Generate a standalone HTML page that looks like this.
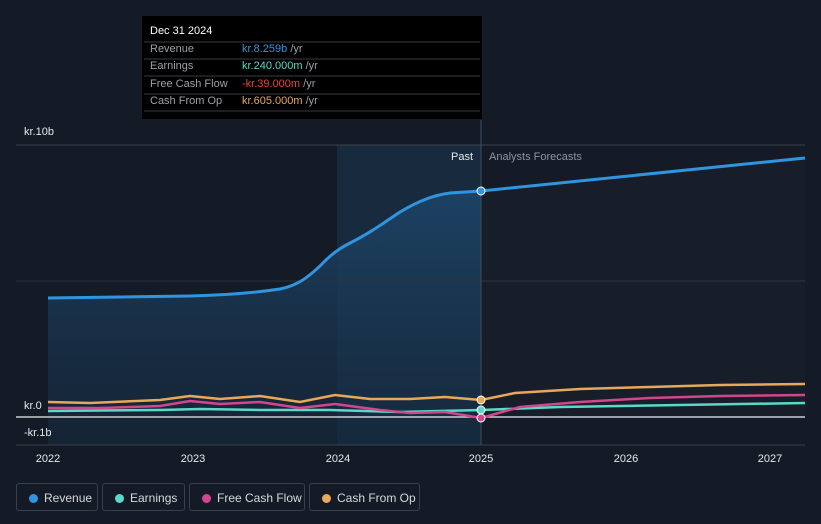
<!DOCTYPE html>
<html><head><meta charset="utf-8"><style>
body{margin:0;background:#151b26;font-family:"Liberation Sans",sans-serif;}
.lg{position:absolute;top:483px;height:28px;border:1px solid #3a404b;border-radius:3px;color:#d6d8dc;font-size:12px;line-height:28px;box-sizing:border-box;padding-left:27px}
.lg i{position:absolute;left:12px;top:10px;width:9px;height:9px;border-radius:50%}
.tt{position:absolute;left:142px;top:16px;width:340px;height:103px;background:#000;}
.tt div{position:absolute;left:8px;font-size:11px;color:#9aa0a8}
.tt span{position:absolute;left:92px;white-space:nowrap}
</style></head><body>
<svg width="821" height="524" style="position:absolute;left:0;top:0">
<defs><linearGradient id="g" x1="0" y1="0" x2="0" y2="1"><stop offset="0" stop-color="#1d4468" stop-opacity=".9"/><stop offset="1" stop-color="#15293d" stop-opacity=".6"/></linearGradient></defs>
<rect x="337" y="145" width="144" height="300" fill="#182a3d"/>
<path d="M48 298 L120 297 L190 296 C230 295 260 292 280 289 C300 285 310 275 320 266 C330 255 340 248 350 243 C370 233 385 222 400 212 C420 200 435 195 450 193 L481 191 L481 445 L48 445Z" fill="url(#g)"/>
<path d="M481 191 L805 158 L805 417 L481 417Z" fill="#1a212c" opacity=".6"/>
<line x1="16" y1="145" x2="805" y2="145" stroke="#3a414c"/>
<line x1="16" y1="281" x2="805" y2="281" stroke="#2c333e"/>
<line x1="16" y1="445" x2="805" y2="445" stroke="#3a414c"/>
<line x1="481" y1="120" x2="481" y2="445" stroke="#3d4f62"/>
<line x1="16" y1="417" x2="805" y2="417" stroke="#c8ccd2" stroke-width="1.5"/>
<path d="M48 298 L120 297 L190 296 C230 295 260 292 280 289 C300 285 310 275 320 266 C330 255 340 248 350 243 C370 233 385 222 400 212 C420 200 435 195 450 193 L481 191 L805 158" fill="none" stroke="#2f95e0" stroke-width="3"/>
<path d="M48 411 L160 410 L200 409 L260 410 L330 410 L400 412 L481 410 L560 407 L680 405 L805 403" fill="none" stroke="#5ad8c8" stroke-width="2.5"/>
<path d="M48 408 L100 408 L160 406 L190 401 L220 404 L260 402 L300 408 L335 404 L380 410 L410 413 L445 412 L481 418 L520 407 L580 402 L650 398 L720 396 L805 395" fill="none" stroke="#d2468e" stroke-width="2.5"/>
<path d="M48 402 L90 403 L160 400 L190 396 L220 399 L260 396 L300 402 L335 395 L370 399 L410 399 L445 397 L481 400 L515 393 L580 389 L650 387 L720 385 L805 384" fill="none" stroke="#e8a85a" stroke-width="2.5"/>
<circle cx="481" cy="191" r="4" fill="#2f95e0" stroke="#fff"/>
<circle cx="481" cy="400" r="4" fill="#e8a85a" stroke="#fff"/>
<circle cx="481" cy="410" r="4" fill="#5ad8c8" stroke="#fff"/>
<circle cx="481" cy="418" r="4" fill="#d2468e" stroke="#fff"/>
<g font-size="11" fill="#e6e8eb"><text x="24" y="135">kr.10b</text><text x="24" y="409">kr.0</text><text x="24" y="436">-kr.1b</text>
<g text-anchor="middle"><text x="48" y="462">2022</text><text x="193" y="462">2023</text><text x="338" y="462">2024</text><text x="481" y="462">2025</text><text x="626" y="462">2026</text><text x="770" y="462">2027</text></g>
<text x="473" y="160" text-anchor="end">Past</text><text x="489" y="160" fill="#8e959e">Analysts Forecasts</text></g>
</svg>
<div class="tt">
<div style="top:9px;color:#fff">Dec 31 2024</div>
<div style="top:27px">Revenue<span style="color:#2f95e0">kr.8.259b <b style="font-weight:normal;color:#9aa0a8">/yr</b></span></div>
<div style="top:44px">Earnings<span style="color:#5ad8c8">kr.240.000m <b style="font-weight:normal;color:#9aa0a8">/yr</b></span></div>
<div style="top:62px">Free Cash Flow<span style="color:#e8413f">-kr.39.000m <b style="font-weight:normal;color:#9aa0a8">/yr</b></span></div>
<div style="top:79px">Cash From Op<span style="color:#e8a85a">kr.605.000m <b style="font-weight:normal;color:#9aa0a8">/yr</b></span></div>
<svg width="340" height="103" style="position:absolute;left:0;top:0"><g stroke="#3a3d42"><line x1="2" y1="26" x2="338" y2="26"/><line x1="2" y1="43" x2="338" y2="43"/><line x1="2" y1="60" x2="338" y2="60"/><line x1="2" y1="78" x2="338" y2="78"/><line x1="2" y1="95" x2="338" y2="95"/></g></svg>
</div>
<div class="lg" style="left:16px;width:82px"><i style="background:#2f95e0"></i>Revenue</div>
<div class="lg" style="left:102px;width:83px"><i style="background:#5ad8c8"></i>Earnings</div>
<div class="lg" style="left:189px;width:116px"><i style="background:#d2468e"></i>Free Cash Flow</div>
<div class="lg" style="left:309px;width:111px"><i style="background:#e8a85a"></i>Cash From Op</div>
</body></html>
